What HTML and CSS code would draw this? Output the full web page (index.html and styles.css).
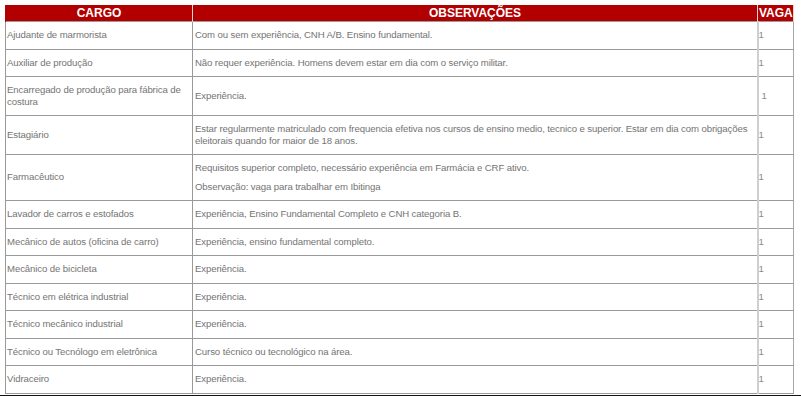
FILE: index.html
```html
<!DOCTYPE html>
<html lang="pt-BR">
<head>
<meta charset="utf-8">
<title>Vagas</title>
<link rel="stylesheet" href="styles.css">
</head>
<body>
<table class="vagas">
  <colgroup>
    <col class="c-cargo">
    <col class="c-obs">
    <col class="c-vaga">
  </colgroup>
  <thead>
    <tr><th>CARGO</th><th>OBSERVAÇÕES</th><th class="h-vaga">VAGA</th></tr>
  </thead>
  <tbody>
    <tr><td>Ajudante de marmorista</td><td>Com ou sem experiência, CNH A/B. Ensino fundamental.</td><td class="vaga">1</td></tr>
    <tr><td>Auxiliar de produção</td><td>Não requer experiência. Homens devem estar em dia com o serviço militar.</td><td class="vaga">1</td></tr>
    <tr><td>Encarregado de produção para fábrica de costura</td><td>Experiência.</td><td class="vaga ind">1</td></tr>
    <tr><td>Estagiário</td><td>Estar regularmente matriculado com frequencia efetiva nos cursos de ensino medio, tecnico e superior. Estar em dia com obrigações eleitorais quando for maior de 18 anos.</td><td class="vaga">1</td></tr>
    <tr><td>Farmacêutico</td><td><p class="para">Requisitos superior completo, necessário experiência em Farmácia e CRF ativo.</p><p class="para">Observação: vaga para trabalhar em Ibitinga</p></td><td class="vaga">1</td></tr>
    <tr><td>Lavador de carros e estofados</td><td>Experiência, Ensino Fundamental Completo e CNH categoria B.</td><td class="vaga">1</td></tr>
    <tr><td>Mecânico de autos (oficina de carro)</td><td>Experiência, ensino fundamental completo.</td><td class="vaga">1</td></tr>
    <tr><td>Mecânico de bicicleta</td><td>Experiência.</td><td class="vaga">1</td></tr>
    <tr><td>Técnico em elétrica industrial</td><td>Experiência.</td><td class="vaga">1</td></tr>
    <tr><td>Técnico mecânico industrial</td><td>Experiência.</td><td class="vaga">1</td></tr>
    <tr><td>Técnico ou Tecnólogo em eletrônica</td><td>Curso técnico ou tecnológico na área.</td><td class="vaga">1</td></tr>
    <tr><td>Vidraceiro</td><td>Experiência.</td><td class="vaga">1</td></tr>
  </tbody>
</table>
<div class="rule"></div>
</body>
</html>
```
FILE: styles.css
```css
html, body {
  margin: 0;
  padding: 0;
  background: #ffffff;
}
body {
  padding: 5px 0 0 5px;
  font-family: "Liberation Sans", Arial, sans-serif;
}
.vagas {
  border-collapse: collapse;
  width: 788px;
  table-layout: fixed;
  font-size: 9.6px;
  letter-spacing: -0.1px;
  line-height: 11.5px;
  color: #747474;
}
.c-cargo { width: 187px; }
.c-obs { width: 565px; }
.c-vaga { width: 36px; }
.vagas th {
  background: #b20000;
  color: #ffffff;
  font-weight: bold;
  font-size: 12px;
  letter-spacing: 0;
  line-height: 14px;
  height: 16px;
  padding: 0;
  text-align: center;
  border-left: 1px solid #f0d0d0;
  border-right: 1px solid #f0d0d0;
}
.vagas th:first-child { border-left: 1px solid #b20000; }
.vagas th.h-vaga { text-align: left; padding-left: 1px; }
.vagas td {
  border: 1px solid #9a9a9a;
  padding: 7px 2px 8px 2px;
  vertical-align: middle;
  text-align: left;
}
.vagas td:first-child { padding-left: 1px; }
.vagas td.vaga {
  border-left: 2px solid #cfcfcf;
  border-right: 1px solid #a8a8a8;
  padding-left: 0;
  color: #8a8a8a;
}
.vagas td.ind { padding-left: 3px; }
.para { margin: 0; }
.para + .para { margin-top: 7px; }
.rule {
  margin: 1px 0 0 -5px;
  height: 2px;
  width: 801px;
  background: #111111;
}
```
